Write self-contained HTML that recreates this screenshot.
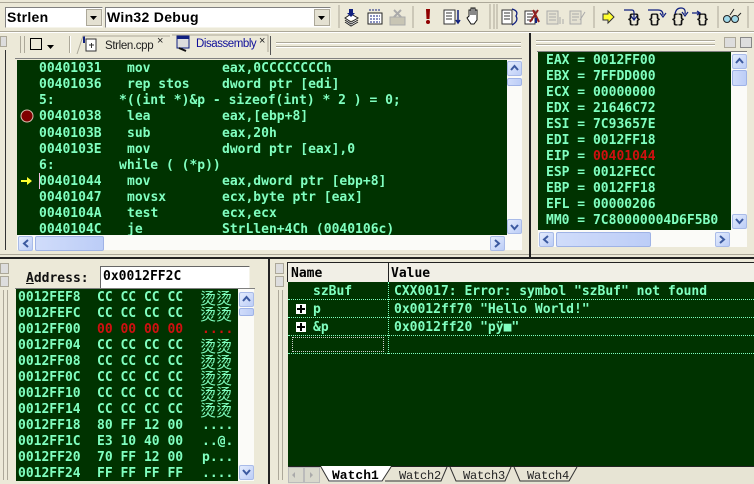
<!DOCTYPE html>
<html><head><meta charset="utf-8">
<style>
html,body{margin:0;padding:0}
body{width:754px;height:484px;overflow:hidden;position:relative;background:#ece9d8}
div,span{position:absolute;white-space:pre}
.g{background:#003300}
.t{font:bold 13px/16px "DejaVu Sans Mono","Liberation Mono",monospace;color:#80ffc0;margin-top:1px}
.r{color:#d01010}
.c{font:16px/16px "WenQuanYi Zen Hei","Noto Sans CJK SC",sans-serif;color:#80ffc0}
.box{background:#fff;border-top:1px solid #808080;border-left:1px solid #808080;border-right:1px solid #f5f4ea;border-bottom:1px solid #f5f4ea;box-sizing:border-box}
.sb{background:#fbfbf8}
.btn{background:linear-gradient(135deg,#e4ecfd,#bccdf7);border:1px solid #a9bbe8;border-radius:2px;box-sizing:border-box;width:15px;height:15px}
.th{background:linear-gradient(90deg,#d0dcfa,#bccdf7);border:1px solid #9fb3e6;border-radius:2px;box-sizing:border-box}
.hl{background:#aca899;height:1px}
.wl{background:#fff;height:1px}
.vl{background:#aca899;width:1px}
.vw{background:#fff;width:1px}
.tb{font:12px/16px "Liberation Mono",monospace;color:#222;letter-spacing:-.2px}
</style></head><body>

<!-- top toolbar -->
<div class="box" style="left:5px;top:7px;width:98px;height:21px"></div>
<div style="left:7px;top:9px;font:bold 14px/17px 'Liberation Sans',sans-serif;letter-spacing:.3px;color:#000">Strlen</div>
<div style="left:86px;top:9px;width:16px;height:17px;background:#e4e1d2;border:1px solid #aca899;box-sizing:border-box"></div>
<div class="box" style="left:105px;top:7px;width:226px;height:21px"></div>
<div style="left:107px;top:9px;font:bold 14px/17px 'Liberation Sans',sans-serif;letter-spacing:.3px;color:#000">Win32 Debug</div>
<div style="left:314px;top:9px;width:16px;height:17px;background:#e4e1d2;border:1px solid #aca899;box-sizing:border-box"></div>
<div class="hl" style="left:0;top:2px;width:754px"></div>
<div class="hl" style="left:0;top:31px;width:754px"></div>
<div class="wl" style="left:0;top:32px;width:754px"></div>

<!-- second row tabs -->
<div class="vl" style="left:20px;top:36px;height:17px"></div>
<div class="vl" style="left:24px;top:36px;height:17px"></div>
<div class="vl" style="left:69px;top:36px;height:17px"></div>
<div class="vw" style="left:70px;top:36px;height:17px"></div>
<div style="left:30px;top:38px;width:12px;height:12px;border:1px solid #000;background:#ece9d8;box-sizing:border-box"></div>
<div style="left:105px;top:38px;font:11.500px/16px 'Liberation Sans',sans-serif;letter-spacing:-.35px;color:#222">Strlen.cpp</div>
<div style="left:196px;top:36px;font:11.500px/16px 'Liberation Sans',sans-serif;letter-spacing:-.45px;color:#10109a">Disassembly</div>
<div style="left:157px;top:35px;font:11px/13px 'Liberation Sans',sans-serif;color:#222">×</div>
<div style="left:259px;top:35px;font:11px/13px 'Liberation Sans',sans-serif;color:#222">×</div>
<div class="vl" style="left:270px;top:36px;height:19px;background:#555"></div>
<div class="hl" style="left:276px;top:42px;width:245px"></div>
<div class="wl" style="left:276px;top:43px;width:245px"></div>
<div class="hl" style="left:276px;top:46px;width:245px"></div>
<div class="wl" style="left:276px;top:47px;width:245px"></div>
<div class="hl" style="left:536px;top:40px;width:179px"></div>
<div class="wl" style="left:536px;top:41px;width:179px"></div>
<div class="hl" style="left:536px;top:44px;width:179px"></div>
<div class="wl" style="left:536px;top:45px;width:179px"></div>
<div style="left:724px;top:37px;width:12px;height:11px;background:#ddd;border:1px solid #aca899;box-sizing:border-box"></div>
<div style="left:740px;top:37px;width:12px;height:11px;background:#ddd;border:1px solid #888;box-sizing:border-box"></div>
<div style="left:0;top:36px;width:7px;height:11px;background:#ddd;border:1px solid #aca899;box-sizing:border-box"></div>

<!-- left strip -->
<div class="vl" style="left:5px;top:50px;height:200px;background:#333"></div>
<div class="hl" style="left:15px;top:58px;width:507px;background:#808080"></div>

<!-- Disassembly -->
<div class="g" style="left:17px;top:60px;width:490px;height:175px;overflow:hidden"></div>
<div class="t" style="left:39px;top:60px;width:468px;height:174px;overflow:hidden"><span style="top:0;left:0">00401031</span><span style="top:0;left:88px">mov</span><span style="top:0;left:183px">eax,0CCCCCCCCh</span>
<span style="top:16px;left:0">00401036</span><span style="top:16px;left:88px">rep stos</span><span style="top:16px;left:183px">dword ptr [edi]</span>
<span style="top:32px;left:0">5:</span><span style="top:32px;left:80px">*((int *)&amp;p - sizeof(int) * 2 ) = 0;</span>
<span style="top:48px;left:0">00401038</span><span style="top:48px;left:88px">lea</span><span style="top:48px;left:183px">eax,[ebp+8]</span>
<span style="top:65px;left:0">0040103B</span><span style="top:65px;left:88px">sub</span><span style="top:65px;left:183px">eax,20h</span>
<span style="top:81px;left:0">0040103E</span><span style="top:81px;left:88px">mov</span><span style="top:81px;left:183px">dword ptr [eax],0</span>
<span style="top:97px;left:0">6:</span><span style="top:97px;left:80px">while ( (*p))</span>
<span style="top:113px;left:0">00401044</span><span style="top:113px;left:88px">mov</span><span style="top:113px;left:183px">eax,dword ptr [ebp+8]</span>
<span style="top:129px;left:0">00401047</span><span style="top:129px;left:88px">movsx</span><span style="top:129px;left:183px">ecx,byte ptr [eax]</span>
<span style="top:145px;left:0">0040104A</span><span style="top:145px;left:88px">test</span><span style="top:145px;left:183px">ecx,ecx</span>
<span style="top:161px;left:0">0040104C</span><span style="top:161px;left:88px">je</span><span style="top:161px;left:183px">StrLlen+4Ch (0040106c)</span></div>
<div style="left:39px;top:173px;width:1px;height:16px;background:#f0c0e0"></div>
<div class="sb" style="left:507px;top:60px;width:15px;height:175px"></div>
<div class="sb" style="left:17px;top:235px;width:505px;height:15px"></div>
<div class="btn" style="left:507px;top:61px"></div>
<div class="th" style="left:507px;top:78px;width:15px;height:8px"></div>
<div class="btn" style="left:507px;top:219px"></div>
<div class="btn" style="left:18px;top:236px"></div>
<div class="th" style="left:35px;top:236px;width:69px;height:15px"></div>
<div class="btn" style="left:490px;top:236px"></div>

<div class="hl" style="left:0;top:254px;width:754px;background:#aca899"></div>
<div class="hl" style="left:0;top:257px;width:754px;height:2px;background:#222"></div>

<!-- Registers -->
<div class="vl" style="left:529px;top:33px;height:224px;width:2px;background:#222"></div>
<div class="hl" style="left:537px;top:51px;width:210px;background:#808080"></div>
<div class="g" style="left:538px;top:52px;width:193px;height:178px"></div>
<div class="t" style="left:546px;top:52px"><span style="top:0;left:0">EAX = 0012FF00</span>
<span style="top:16px;left:0">EBX = 7FFDD000</span>
<span style="top:32px;left:0">ECX = 00000000</span>
<span style="top:48px;left:0">EDX = 21646C72</span>
<span style="top:64px;left:0">ESI = 7C93657E</span>
<span style="top:80px;left:0">EDI = 0012FF18</span>
<span style="top:96px;left:0">EIP = <span class="r" style="position:static">00401044</span></span>
<span style="top:112px;left:0">ESP = 0012FECC</span>
<span style="top:128px;left:0">EBP = 0012FF18</span>
<span style="top:144px;left:0">EFL = 00000206</span>
<span style="top:160px;left:0">MM0 = 7C80000004D6F5B0</span></div>
<div class="sb" style="left:731px;top:52px;width:16px;height:178px"></div>
<div class="sb" style="left:538px;top:230px;width:209px;height:17px"></div>
<div class="btn" style="left:732px;top:54px"></div>
<div class="th" style="left:732px;top:70px;width:15px;height:16px"></div>
<div class="btn" style="left:732px;top:214px"></div>
<div class="btn" style="left:539px;top:232px"></div>
<div class="th" style="left:556px;top:232px;width:95px;height:15px"></div>
<div class="btn" style="left:715px;top:232px"></div>

<!-- Memory -->
<div style="left:0;top:263px;width:9px;height:11px;background:#ddd;border:1px solid #aca899;box-sizing:border-box"></div>
<div style="left:0;top:276px;width:9px;height:11px;background:#ddd;border:1px solid #aca899;box-sizing:border-box"></div>
<div class="vl" style="left:3px;top:290px;height:190px"></div>
<div class="vl" style="left:7px;top:290px;height:190px"></div>
<div style="left:26px;top:271px;font:bold 13px/16px 'DejaVu Sans Mono',monospace;color:#111"><u>A</u>ddress:</div>
<div class="box" style="left:100px;top:266px;width:150px;height:23px;border-top:1px solid #666;border-left:1px solid #666"></div>
<div style="left:103px;top:269px;font:bold 13px/16px 'DejaVu Sans Mono',monospace;color:#000">0x0012FF2C</div>
<div class="hl" style="left:15px;top:288px;width:240px;background:#808080"></div>
<div class="g" style="left:16px;top:289px;width:222px;height:192px"></div>
<div class="t" style="left:18px;top:289px"><span style="top:0;left:0">0012FEF8</span><span style="top:0;left:79px">CC CC CC CC</span>
<span style="top:16px;left:0">0012FEFC</span><span style="top:16px;left:79px">CC CC CC CC</span>
<span style="top:32px;left:0">0012FF00</span><span class="r" style="top:32px;left:79px">00 00 00 00</span><span class="r" style="top:32px;left:184px">....</span>
<span style="top:48px;left:0">0012FF04</span><span style="top:48px;left:79px">CC CC CC CC</span>
<span style="top:64px;left:0">0012FF08</span><span style="top:64px;left:79px">CC CC CC CC</span>
<span style="top:80px;left:0">0012FF0C</span><span style="top:80px;left:79px">CC CC CC CC</span>
<span style="top:96px;left:0">0012FF10</span><span style="top:96px;left:79px">CC CC CC CC</span>
<span style="top:112px;left:0">0012FF14</span><span style="top:112px;left:79px">CC CC CC CC</span>
<span style="top:128px;left:0">0012FF18</span><span style="top:128px;left:79px">80 FF 12 00</span><span style="top:128px;left:184px">....</span>
<span style="top:144px;left:0">0012FF1C</span><span style="top:144px;left:79px">E3 10 40 00</span><span style="top:144px;left:184px">..@.</span>
<span style="top:160px;left:0">0012FF20</span><span style="top:160px;left:79px">70 FF 12 00</span><span style="top:160px;left:184px">p...</span>
<span style="top:176px;left:0">0012FF24</span><span style="top:176px;left:79px">FF FF FF FF</span><span style="top:176px;left:184px">....</span></div>
<div class="c" style="left:200px;top:289px">烫烫</div>
<div class="c" style="left:200px;top:305px">烫烫</div>
<div class="c" style="left:200px;top:337px">烫烫</div>
<div class="c" style="left:200px;top:353px">烫烫</div>
<div class="c" style="left:200px;top:369px">烫烫</div>
<div class="c" style="left:200px;top:385px">烫烫</div>
<div class="c" style="left:200px;top:401px">烫烫</div>
<div class="sb" style="left:238px;top:289px;width:16px;height:192px"></div>
<div class="btn" style="left:239px;top:292px"></div>
<div class="th" style="left:239px;top:308px;width:15px;height:8px"></div>
<div class="btn" style="left:239px;top:465px"></div>

<!-- Watch -->
<div class="vl" style="left:268px;top:259px;height:225px;width:2px;background:#222"></div>
<div style="left:275px;top:263px;width:9px;height:11px;background:#ddd;border:1px solid #aca899;box-sizing:border-box"></div>
<div style="left:275px;top:276px;width:9px;height:11px;background:#ddd;border:1px solid #aca899;box-sizing:border-box"></div>
<div class="vl" style="left:278px;top:290px;height:190px"></div>
<div class="vl" style="left:282px;top:290px;height:190px"></div>
<div style="left:287px;top:262px;width:467px;height:20px;background:#f1efe6;border-top:1px solid #222;border-left:1px solid #222;box-sizing:border-box"></div>
<div class="vl" style="left:388px;top:263px;height:19px;background:#222"></div>
<div style="left:291px;top:266px;font:bold 13px/16px 'DejaVu Sans Mono',monospace;color:#000">Name</div>
<div style="left:391px;top:266px;font:bold 13px/16px 'DejaVu Sans Mono',monospace;color:#000">Value</div>
<div class="g" style="left:288px;top:282px;width:466px;height:184px"></div>
<div class="t" style="left:313px;top:283px">szBuf</div>
<div class="t" style="left:394px;top:283px">CXX0017: Error: symbol "szBuf" not found</div>
<div class="t" style="left:313px;top:301px">p</div>
<div class="t" style="left:394px;top:301px">0x0012ff70 "Hello World!"</div>
<div class="t" style="left:313px;top:319px">&amp;p</div>
<div class="t" style="left:394px;top:319px">0x0012ff20 "pÿ■"</div>
<div style="left:288px;top:299px;width:466px;border-top:1px dotted #80ffc0"></div>
<div style="left:288px;top:317px;width:466px;border-top:1px dotted #80ffc0"></div>
<div style="left:288px;top:335px;width:466px;border-top:1px dotted #80ffc0"></div>
<div style="left:288px;top:353px;width:466px;border-top:1px dotted #80ffc0"></div>
<div style="left:388px;top:282px;height:72px;border-left:1px dotted #80ffc0"></div>
<div style="left:292px;top:337px;width:92px;height:15px;border:1px dotted #ccc;box-sizing:border-box"></div>
<div style="left:296px;top:304px;width:10px;height:10px;background:#fff"></div>
<div style="left:297px;top:308px;width:8px;height:2px;background:#000"></div>
<div style="left:300px;top:305px;width:2px;height:8px;background:#000"></div>
<div style="left:296px;top:322px;width:10px;height:10px;background:#fff"></div>
<div style="left:297px;top:326px;width:8px;height:2px;background:#000"></div>
<div style="left:300px;top:323px;width:2px;height:8px;background:#000"></div>

<div style="left:288px;top:466px;width:466px;height:18px;background:#e7e4d4;border-top:1px solid #222;box-sizing:border-box"></div>
<div style="left:288px;top:467px;width:16px;height:16px;background:#d8d8cc;border:1px solid #bbb;box-sizing:border-box"></div>
<div style="left:304px;top:467px;width:16px;height:16px;background:#d8d8cc;border:1px solid #bbb;box-sizing:border-box"></div>
<svg style="position:absolute;left:0;top:0" width="754" height="484" viewBox="0 0 754 484">
<!-- watch tabs -->
<path d="M321 466L329 482H382L391 466Z" fill="#fff"/>
<path d="M321 467L329 481H382L391 467M385 481H441L447 467M450 467L456 481H505L511 467M514 467L520 481H569L577 467" fill="none" stroke="#333"/>
<path d="M295 472L292 475L295 478ZM310 472L313 475L310 478Z" fill="#aaa"/>
<!-- combo arrows -->
<path d="M90 16H97L93.500 20Z M318 16H325L321.500 20Z M47 45L54 45L50.500 49Z" fill="#000"/>
<!-- breakpoint -->
<circle cx="27" cy="116" r="6" fill="#800000" stroke="#d8c0b0"/>
<!-- yellow arrow -->
<path d="M21 180H27V177L32 181L27 185V182H21Z" fill="#ffff30"/>
<!-- scroll arrows -->
<g fill="none" stroke="#3c5aa0" stroke-width="2">
<path d="M511 70L514.500 66L518 70M511 225L514.500 229L518 225M736 63L739.500 59L743 63M736 219L739.500 223L743 219M243 301L246.500 297L250 301M243 470L246.500 474L250 470"/>
<path d="M28 240L24 243.500L28 247M495 240L499 243.500L495 247M548 236L544 239.500L548 243M720 236L724 239.500L720 243"/>
</g>
<!-- toolbar separators -->
<g stroke="#aca899"><path d="M339 5V28M413 6V28M490 4V29M494 4V29M497 4V29M594 6V28M718 6V28M748 6V28"/></g>
<!-- stack icon -->
<path d="M345 18L351 14L358 18L351 22Z M345 20L351 24L358 20M345 22L351 26L358 22" fill="#fff" stroke="#222"/>
<path d="M349 9H353V13H355L351 17L347 13H349Z" fill="#102080"/>
<!-- grid icon -->
<rect x="368" y="13" width="14" height="11" fill="#fff" stroke="#222"/>
<path d="M369 10h11M370 16h10M370 19h10M370 22h10" stroke="#102080" stroke-dasharray="2 1"/>
<!-- grayed -->
<rect x="390" y="17" width="15" height="8" fill="#c8c5b4" stroke="#aaa"/>
<path d="M394 10L401 17M401 10L394 17" stroke="#aaa" stroke-width="2"/>
<!-- ! -->
<path d="M426 9H430L429.500 19H426.500Z" fill="#900000"/><circle cx="428" cy="22" r="2" fill="#900000"/>
<!-- step list -->
<rect x="444" y="10" width="11" height="14" fill="#fff" stroke="#333"/>
<path d="M446 13h6M446 16h6M446 19h6" stroke="#333"/>
<path d="M458 10V22M456 20L458 23L460 20" stroke="#102080" fill="none" stroke-width="1.500"/>
<!-- hand -->
<path d="M469 16V10H471V15V8H473V15V8H475V15V10H477V20L474 24H471L467 18Z" fill="#fff" stroke="#111"/>
<!-- 508 -->
<rect x="502" y="10" width="10" height="14" fill="#fff" stroke="#333"/>
<path d="M504 13h6M504 16h6M504 19h6" stroke="#333"/>
<path d="M512 9Q519 11 516 16Q519 21 512 25" fill="none" stroke="#102080" stroke-width="1.300"/>
<!-- 531 -->
<rect x="525" y="11" width="10" height="13" fill="#fff" stroke="#333"/>
<path d="M527 14h6M527 17h6M527 20h6" stroke="#333"/>
<path d="M530 22L538 10M533 10L539 22" stroke="#902020" stroke-width="2"/>
<path d="M536 18V23" stroke="#102080" stroke-width="2"/>
<!-- gray -->
<rect x="547" y="11" width="11" height="13" fill="#e4e1d2" stroke="#aaa"/>
<path d="M549 14h7M549 17h7M549 20h7M560 17V24M563 19V24" stroke="#aaa"/>
<rect x="570" y="11" width="11" height="13" fill="#e4e1d2" stroke="#aaa"/>
<path d="M572 14h7M572 17h7M572 20h5M580 20L585 12" stroke="#aaa"/>
<!-- yellow right arrow -->
<path d="M603 14H608V11L614 17L608 23V20H603Z" fill="#ffff30" stroke="#333"/>
<!-- step icons -->
<g fill="none" stroke="#102080" stroke-width="1.200">
<path d="M624 10H632Q634 10 634 13V19M631 16L634 20L637 16"/>
<path d="M648 10H658Q663 10 663 15M660 13L663 17L666 13"/>
<path d="M675 14Q676 8 681 8Q686 8 685 14M682 12L685 16L688 12"/>
<path d="M692 13H699M697 11L700 13L697 15"/>
</g>
<g font-family="Liberation Mono,monospace" font-weight="bold" font-size="13" fill="#111">
<text x="627" y="23" textLength="14">{}</text>
<text x="648" y="23" textLength="13">{}</text>
<text x="671" y="23" textLength="14">{}</text>
<text x="696" y="23" textLength="13">{}</text>
</g>
<!-- glasses -->
<circle cx="727" cy="19" r="3.500" fill="#a0d8e8" stroke="#222"/>
<circle cx="735" cy="19" r="3.500" fill="#a0d8e8" stroke="#222"/>
<path d="M730 15L734 9M738 16L741 13" stroke="#222" fill="none"/>
<!-- doc tab icons -->
<rect x="86" y="39" width="10" height="12" fill="#fff" stroke="#333"/>
<path d="M84 36V43" stroke="#102080" stroke-width="2"/>
<path d="M89 45h5M91.500 43v5" stroke="#333"/>
<rect x="177" y="36" width="12" height="12" fill="#ddd" stroke="#102080"/>
<rect x="177" y="36" width="12" height="3" fill="#102080"/>
<path d="M179 48L186 51" stroke="#111" stroke-width="2"/>
<path d="M77 54L83 36H163L170 36M172 35H268V52" fill="none" stroke="#aca899"/>
</svg>
<div class="tb" style="left:332px;top:468px;font-weight:bold;font-size:13px;letter-spacing:0;color:#000">Watch1</div>
<div class="tb" style="left:399px;top:468px">Watch2</div>
<div class="tb" style="left:463px;top:468px">Watch3</div>
<div class="tb" style="left:527px;top:468px">Watch4</div>
</body></html>
